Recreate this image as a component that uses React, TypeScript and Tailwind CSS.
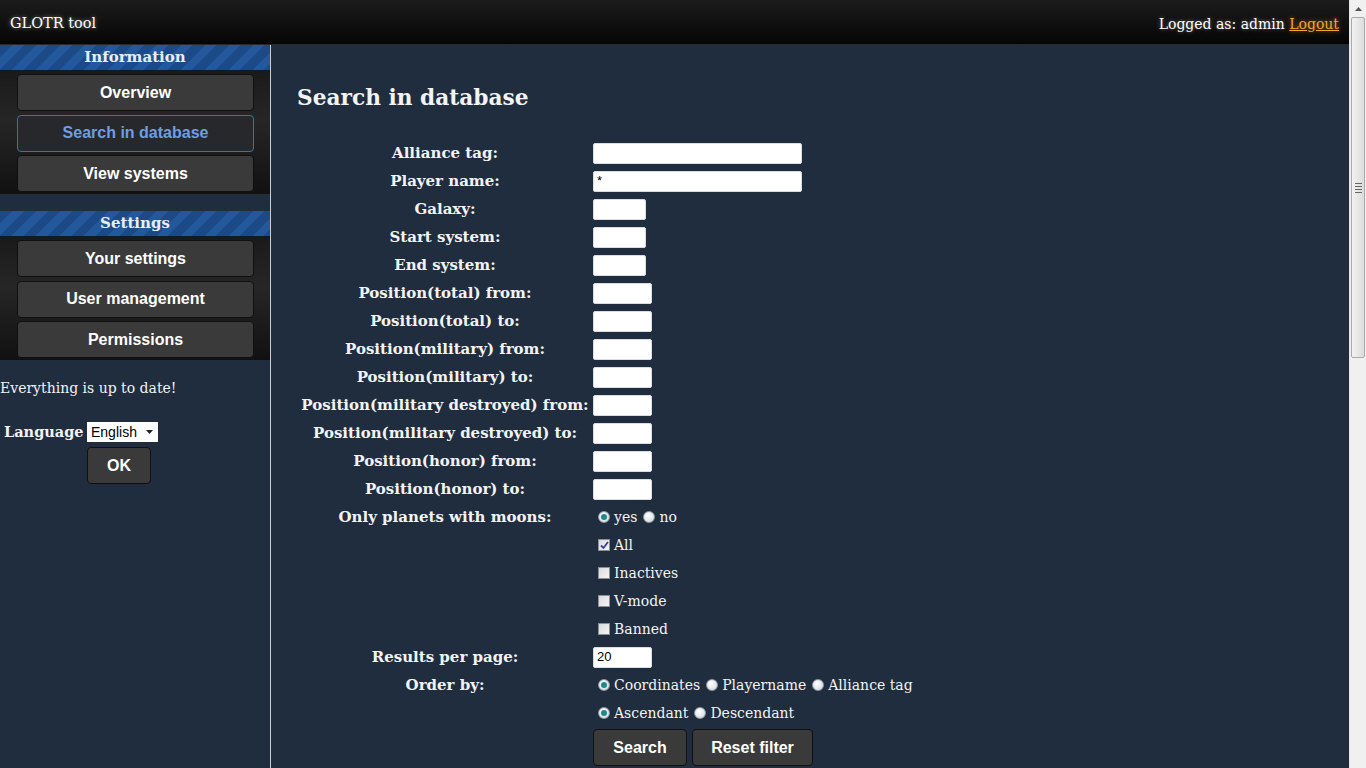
import React from 'react';

const serif = "font-['DejaVu_Serif',Georgia,serif]";
const sans = "font-['Liberation_Sans',Arial,sans-serif]";

function NavButton({ label, active }: { label: string; active?: boolean }) {
  return (
    <div
      className={`h-[37px] ml-[17px] mr-[16px] flex items-center justify-center rounded-[4px] border ${sans} text-[16px] font-bold ${
        active
          ? 'border-[#3a6fb8] bg-[#26282c] text-[#6e9de6]'
          : 'border-[#101010] bg-[#3a3a3a] text-white'
      }`}
    >
      {label}
    </div>
  );
}

function SectionHead({ title }: { title: string }) {
  return (
    <div
      className={`h-[26px] flex items-center justify-center border-b border-[#0c1a2c] bg-[repeating-linear-gradient(135deg,#1b4a86_0px,#1b4a86_9px,#23589c_9px,#23589c_17px)] ${serif} text-[15px] font-bold text-[#e8eef6]`}
    >
      {title}
    </div>
  );
}

function Radio({ checked }: { checked?: boolean }) {
  return (
    <span className="inline-flex h-[12px] w-[12px] items-center justify-center rounded-full border border-[#8d9aa3] bg-[radial-gradient(circle_at_40%_35%,#ffffff,#cfd4d8)]">
      {checked && <span className="h-[6px] w-[6px] rounded-full bg-[#1f8a8c]" />}
    </span>
  );
}

function Check({ checked }: { checked?: boolean }) {
  return (
    <span className="inline-flex h-[12px] w-[12px] items-center justify-center border border-[#8a8f94] bg-[linear-gradient(135deg,#d9dcde,#f4f4f4)]">
      {checked && (
        <svg width="9" height="9" viewBox="0 0 9 9">
          <path d="M1 4.5 L3.5 7 L8 1" fill="none" stroke="#3b3f9a" strokeWidth="1.8" />
        </svg>
      )}
    </span>
  );
}

function Input({ w, value }: { w: string; value?: string }) {
  return (
    <div className={`${w} h-[21px] bg-white border border-[#d7dde3] rounded-[2px] flex items-center px-[3px] ${sans} text-[13px] text-black`}>
      {value}
    </div>
  );
}

function Row({ label, children }: { label?: string; children: React.ReactNode }) {
  return (
    <div className="flex h-[28px] items-center">
      <div className={`w-[296px] text-center ${serif} text-[15px] font-bold text-[#f3f3f3]`}>{label}</div>
      <div className={`flex items-center ${serif} text-[14px] text-[#f3f3f3]`}>{children}</div>
    </div>
  );
}

function Btn({ label, w }: { label: string; w: string }) {
  return (
    <div className={`${w} h-[37px] flex items-center justify-center rounded-[4px] border border-[#101010] bg-[#3a3a3a] ${sans} text-[16px] font-bold text-white`}>
      {label}
    </div>
  );
}

export default function App() {
  const positions = [
    'Position(total) from:',
    'Position(total) to:',
    'Position(military) from:',
    'Position(military) to:',
    'Position(military destroyed) from:',
    'Position(military destroyed) to:',
    'Position(honor) from:',
    'Position(honor) to:',
  ];

  return (
    <div className="flex h-[768px] w-[1366px] overflow-hidden bg-[#1f2d3f]">
      <div className="flex flex-1 flex-col">
        {/* top bar */}
        <div className={`flex h-[45px] items-center justify-between border-b border-[#2a2a2a] bg-[linear-gradient(#1c1c1c,#050505)] px-[10px] pt-[4px] ${serif} text-[14.5px] text-white`}>
          <span className="[text-shadow:0_0_4px_rgba(255,255,255,0.5)]">GLOTR tool</span>
          <span className="text-[14px] [text-shadow:0_0_4px_rgba(255,255,255,0.4)]">
            Logged as: admin{' '}
            <span className="text-[#f0a830] underline [text-shadow:0_0_5px_rgba(240,150,30,0.7)]">Logout</span>
          </span>
        </div>

        <div className="flex flex-1">
          {/* sidebar */}
          <div className="w-[271px] border-r border-[#c9ced4]">
            <SectionHead title="Information" />
            <div className="flex flex-col gap-[3.5px] bg-[linear-gradient(#1a1a1a,#262626_40%,#111)] pt-[3px] pb-[2px]">
              <NavButton label="Overview" />
              <NavButton label="Search in database" active />
              <NavButton label="View systems" />
            </div>

            <div className="mt-[17px]">
              <SectionHead title="Settings" />
              <div className="flex flex-col gap-[3.5px] bg-[linear-gradient(#1a1a1a,#262626_40%,#111)] pt-[3px] pb-[2px]">
                <NavButton label="Your settings" />
                <NavButton label="User management" />
                <NavButton label="Permissions" />
              </div>
            </div>

            <div className={`mt-[18px] leading-[20px] ${serif} text-[14px] text-[#f3f3f3]`}>Everything is up to date!</div>

            <div className="mt-[24px] flex">
              <div className={`w-[87px] pl-[4px] ${serif} text-[14.5px] font-bold text-[#f3f3f3] leading-[20px]`}>Language</div>
              <div className="flex flex-col items-start gap-[5px]">
                <div className={`flex h-[20px] w-[71px] items-center justify-between bg-white pl-[4px] pr-[5px] ${sans} text-[14px] text-black`}>
                  English
                  <svg width="7" height="4" viewBox="0 0 7 4">
                    <path d="M0 0 H7 L3.5 4 Z" fill="#222" />
                  </svg>
                </div>
                <Btn label="OK" w="w-[64px]" />
              </div>
            </div>
          </div>

          {/* main */}
          <div className="flex-1 pl-[26px] pt-[38px]">
            <h2 className={`${serif} text-[21.7px] font-bold leading-[30px] text-[#f3f3f3]`}>Search in database</h2>
            <div className="mt-[26px]">
              <Row label="Alliance tag:">
                <Input w="w-[209px]" />
              </Row>
              <Row label="Player name:">
                <Input w="w-[209px]" value="*" />
              </Row>
              <Row label="Galaxy:">
                <Input w="w-[53px]" />
              </Row>
              <Row label="Start system:">
                <Input w="w-[53px]" />
              </Row>
              <Row label="End system:">
                <Input w="w-[53px]" />
              </Row>
              {positions.map((p) => (
                <Row key={p} label={p}>
                  <Input w="w-[59px]" />
                </Row>
              ))}
              <Row label="Only planets with moons:">
                <span className="ml-[5px] mr-[4px] flex"><Radio checked /></span>yes
                <span className="ml-[6px] mr-[4px] flex"><Radio /></span>no
              </Row>
              <Row>
                <span className="ml-[5px] mr-[4px] flex"><Check checked /></span>All
              </Row>
              <Row>
                <span className="ml-[5px] mr-[4px] flex"><Check /></span>Inactives
              </Row>
              <Row>
                <span className="ml-[5px] mr-[4px] flex"><Check /></span>V-mode
              </Row>
              <Row>
                <span className="ml-[5px] mr-[4px] flex"><Check /></span>Banned
              </Row>
              <Row label="Results per page:">
                <Input w="w-[59px]" value="20" />
              </Row>
              <Row label="Order by:">
                <span className="ml-[5px] mr-[4px] flex"><Radio checked /></span>Coordinates
                <span className="ml-[6px] mr-[4px] flex"><Radio /></span>Playername
                <span className="ml-[6px] mr-[4px] flex"><Radio /></span>Alliance tag
              </Row>
              <Row>
                <span className="ml-[5px] mr-[4px] flex"><Radio checked /></span>Ascendant
                <span className="ml-[6px] mr-[4px] flex"><Radio /></span>Descendant
              </Row>
              <div className="ml-[296px] mt-[2px] flex gap-[5px]">
                <Btn label="Search" w="w-[94px]" />
                <Btn label="Reset filter" w="w-[121px]" />
              </div>
            </div>
          </div>
        </div>
      </div>

      {/* scrollbar */}
      <div className="flex w-[17px] flex-col border-l border-[#e6e6e6] bg-[#f0f0f0]">
        <div className="flex h-[17px] items-center justify-center">
          <svg width="7" height="4" viewBox="0 0 7 4">
            <path d="M3.5 0 L7 4 H0 Z" fill="#555" />
          </svg>
        </div>
        <div className="mx-[1px] flex h-[341px] items-center justify-center rounded-[2px] border border-[#a9a9a9] bg-[linear-gradient(90deg,#f2f2f2,#dcdcdc)]">
          <div className="flex flex-col gap-[2px]">
            <div className="h-px w-[7px] bg-[#666]" />
            <div className="h-px w-[7px] bg-[#666]" />
            <div className="h-px w-[7px] bg-[#666]" />
            <div className="h-px w-[7px] bg-[#666]" />
          </div>
        </div>
      </div>
    </div>
  );
}
